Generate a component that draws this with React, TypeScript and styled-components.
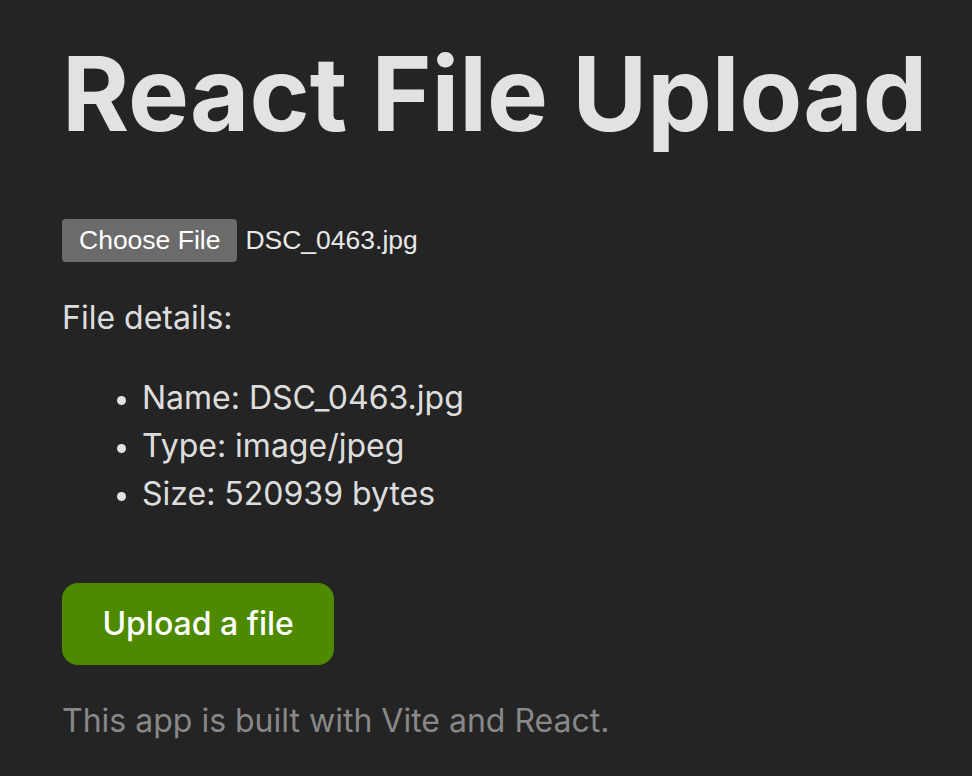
import { createGlobalStyle, styled } from "styled-components";

//====================================================================>

const GlobalStyle = createGlobalStyle`
    html, body {
        margin: 0;
        padding: 0;
        background-color: #242424;
    }

    body {
        font-family: Inter, "Noto Sans", sans-serif;
        font-size: 32px;
        line-height: 1.5;
        font-weight: 400;
        color: rgba(255, 255, 255, 0.87);
        min-height: 776px;
    }
`

const Page = styled.main`
    padding: 0 62px;
    text-align: left;
`

const Title = styled.h1`
    font-size: 102.4px;
    line-height: 1.1;
    font-weight: 700;
    margin: 38px 0 68.6px;
    white-space: nowrap;
`

const FileRow = styled.div`
    display: flex;
    align-items: center;
    gap: 8px;
    height: 43px;
    font-family: "Liberation Sans", Arial, sans-serif;
    font-size: 26.5px;
    line-height: 1;
`

const ChooseButton = styled.label`
    display: flex;
    align-items: center;
    height: 43px;
    padding: 0 17px;
    box-sizing: border-box;
    background-color: #6b6b6b;
    color: #ffffff;
    border-radius: 4px;
    cursor: pointer;
`

const FileName = styled.span`
    color: #e8e8e8;
`

const Paragraph = styled.p<{ $muted?: boolean }>`
    margin: 32px 0;
    color: ${(p) => (p.$muted ? "#888888" : "inherit")};
`

const Details = styled.ul`
    margin: 32px 0;
    padding-left: 80px;

    li::marker {
        font-size: 0.9em;
    }
`

const Actions = styled.div`
    margin-top: 65px;
`

const UploadButton = styled.button`
    border-radius: 16px;
    border: 2px solid transparent;
    padding: 19.2px 38.4px;
    font-size: 32px;
    font-weight: 500;
    font-family: inherit;
    background-color: #4e8a00;
    color: #ffffff;
    cursor: pointer;
`

//====================================================================>

const file = {
    name: "DSC_0463.jpg",
    type: "image/jpeg",
    size: 520939,
}

function App() {
    return (
        <>
            <GlobalStyle />
            <Page>
                <Title>React File Upload</Title>
                <FileRow>
                    <ChooseButton>Choose File</ChooseButton>
                    <FileName>{file.name}</FileName>
                </FileRow>
                <Paragraph>File details:</Paragraph>
                <Details>
                    <li>Name: {file.name}</li>
                    <li>Type: {file.type}</li>
                    <li>Size: {file.size} bytes</li>
                </Details>
                <Actions>
                    <UploadButton>Upload a file</UploadButton>
                </Actions>
                <Paragraph $muted>This app is built with Vite and React.</Paragraph>
            </Page>
        </>
    )
}
export default App
